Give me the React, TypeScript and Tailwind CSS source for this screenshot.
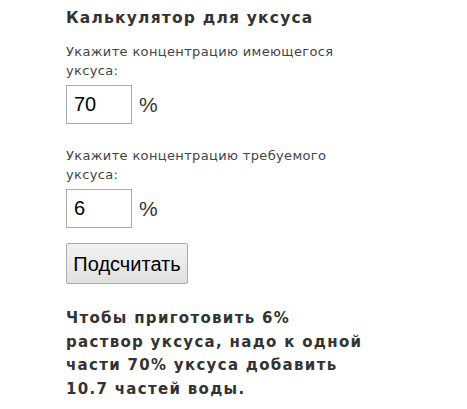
export default function App() {
  return (
    <div className="min-h-screen bg-white pl-[66px] pt-[8px] font-['Verdana','DejaVu_Sans',sans-serif] text-[#333]">
      <h1 className="text-[15.5px] font-bold leading-[20px] tracking-[1.2px]">Калькулятор для уксуса</h1>

      <div className="mt-[14px] w-[290px] text-[13px] leading-[19px] tracking-[0.35px] text-[#444]">
        Укажите концентрацию имеющегося уксуса:
      </div>
      <div className="mt-[5px] flex items-center">
        <input
          defaultValue="70"
          className="h-[39px] w-[66px] border border-[#aaa] px-[7px] font-['Liberation_Sans',Arial,sans-serif] text-[20px] text-black outline-none"
        />
        <span className="ml-[7px] font-['Liberation_Sans',Arial,sans-serif] text-[21px] text-[#333]">%</span>
      </div>

      <div className="mt-[22px] w-[290px] text-[13px] leading-[19px] tracking-[0.35px] text-[#444]">
        Укажите концентрацию требуемого уксуса:
      </div>
      <div className="mt-[5px] flex items-center">
        <input
          defaultValue="6"
          className="h-[39px] w-[66px] border border-[#aaa] px-[7px] font-['Liberation_Sans',Arial,sans-serif] text-[20px] text-black outline-none"
        />
        <span className="ml-[7px] font-['Liberation_Sans',Arial,sans-serif] text-[21px] text-[#333]">%</span>
      </div>

      <button className="mt-[15px] h-[41px] w-[122px] rounded-[2px] border border-[#acacac] bg-gradient-to-b from-[#f2f2f2] to-[#e0e0e0] font-['Liberation_Sans',Arial,sans-serif] text-[20px] text-black">
        Подсчитать
      </button>

      <p className="mt-[23px] w-[300px] text-[15px] font-bold leading-[23.5px] tracking-[1.3px] text-[#333]">
        Чтобы приготовить 6% раствор уксуса, надо к одной части 70% уксуса добавить 10.7 частей воды.
      </p>
    </div>
  )
}
